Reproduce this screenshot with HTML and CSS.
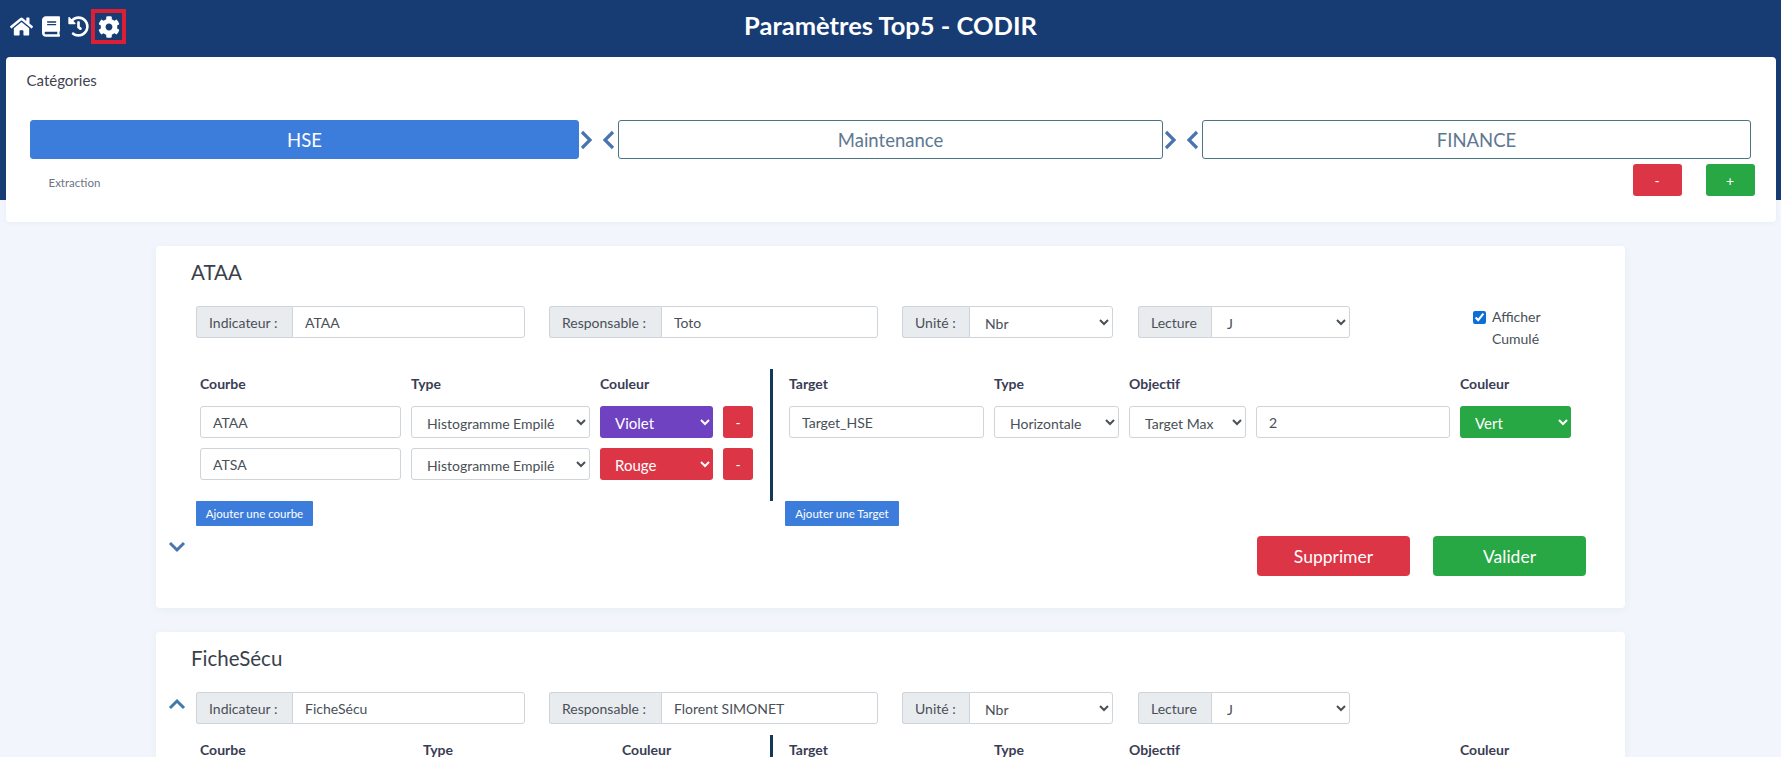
FILE: index.html
```html
<!DOCTYPE html>
<html lang="fr">
<head>
    <meta charset="UTF-8">
    <meta name="viewport" content="width=device-width, initial-scale=1.0">
    <title>Paramètres Top5 - CODIR</title>
    <link rel="stylesheet" href="styles.css">
</head>
<body>

    <header class="topbar">
        <nav class="topbar-icons">
            <a class="nav-icon nav-home"><svg viewBox="0 0 576 512"><path d="M280.37 148.26L96 300.11V464a16 16 0 0 0 16 16l112.06-.29a16 16 0 0 0 15.92-16V368a16 16 0 0 1 16-16h64a16 16 0 0 1 16 16v95.64a16 16 0 0 0 16 16.05L464 480a16 16 0 0 0 16-16V300L295.67 148.26a12.19 12.19 0 0 0-15.3 0zM571.6 251.47L488 182.56V44.05a12 12 0 0 0-12-12h-56a12 12 0 0 0-12 12v72.61L318.47 43a48 48 0 0 0-61 0L4.34 251.47a12 12 0 0 0-1.6 16.9l25.5 31A12 12 0 0 0 45.15 301l235.22-193.74a12.19 12.19 0 0 1 15.3 0L530.9 301a12 12 0 0 0 16.9-1.6l25.5-31a12 12 0 0 0-1.7-16.93z"/></svg></a>
            <a class="nav-icon nav-book"><svg viewBox="0 0 448 512"><path d="M448 360V24c0-13.3-10.7-24-24-24H96C43 0 0 43 0 96v320c0 53 43 96 96 96h328c13.3 0 24-10.7 24-24v-16c0-7.5-3.5-14.3-8.9-18.7-4.2-15.4-4.2-59.3 0-74.7 5.4-4.3 8.9-11.1 8.9-18.6zM128 134c0-3.3 2.7-6 6-6h212c3.3 0 6 2.7 6 6v20c0 3.3-2.7 6-6 6H134c-3.3 0-6-2.7-6-6v-20zm0 64c0-3.3 2.7-6 6-6h212c3.3 0 6 2.7 6 6v20c0 3.3-2.7 6-6 6H134c-3.3 0-6-2.7-6-6v-20zm253.4 250H96c-17.7 0-32-14.3-32-32 0-17.6 14.4-32 32-32h285.4c-1.9 17.1-1.9 46.9 0 64z"/></svg></a>
            <a class="nav-icon nav-history"><svg viewBox="0 0 512 512"><path d="M504 255.531c.253 136.64-111.18 248.372-247.82 248.468-59.015.042-113.223-20.53-155.822-54.911-11.077-8.94-11.905-25.541-1.839-35.607l11.267-11.267c8.609-8.609 22.353-9.551 31.891-1.984C173.062 425.135 212.781 440 256 440c101.705 0 184-82.311 184-184 0-101.705-82.311-184-184-184-48.814 0-93.149 18.969-126.068 49.932l50.754 50.754c10.08 10.08 2.941 27.314-11.313 27.314H24c-8.837 0-16-7.163-16-16V38.627c0-14.254 17.234-21.393 27.314-11.314l49.372 49.372C129.209 34.136 189.552 8 256 8c136.81 0 247.747 110.78 248 247.531zm-180.912 78.784l9.823-12.63c8.138-10.463 6.253-25.542-4.21-33.679L288 256.349V152c0-13.255-10.745-24-24-24h-16c-13.255 0-24 10.745-24 24v135.651l65.409 50.874c10.463 8.137 25.541 6.253 33.679-4.21z"/></svg></a>
            <a class="nav-icon nav-settings"><svg viewBox="0 0 512 512"><path d="M487.4 315.7l-42.6-24.6c4.3-23.2 4.3-47 0-70.2l42.6-24.6c4.9-2.8 7.1-8.6 5.5-14-11.1-35.6-30-67.8-54.7-94.6-3.8-4.1-10-5.1-14.8-2.3L380.8 110c-17.9-15.4-38.5-27.3-60.8-35.1V25.8c0-5.6-3.9-10.5-9.4-11.7-36.7-8.2-74.3-7.8-109.2 0-5.5 1.2-9.4 6.1-9.4 11.7V75c-22.2 7.9-42.8 19.8-60.8 35.1L88.7 85.5c-4.9-2.8-11-1.9-14.8 2.3-24.7 26.7-43.6 58.9-54.7 94.6-1.7 5.4.6 11.2 5.5 14L67.3 221c-4.3 23.2-4.3 47 0 70.2l-42.6 24.6c-4.9 2.8-7.1 8.6-5.5 14 11.1 35.6 30 67.8 54.7 94.6 3.8 4.1 10 5.1 14.8 2.3l42.6-24.6c17.9 15.4 38.5 27.3 60.8 35.1v49.2c0 5.6 3.9 10.5 9.4 11.7 36.7 8.2 74.3 7.8 109.2 0 5.5-1.2 9.4-6.1 9.4-11.7v-49.2c22.2-7.9 42.8-19.8 60.8-35.1l42.6 24.6c4.9 2.8 11 1.9 14.8-2.3 24.7-26.7 43.6-58.9 54.7-94.6 1.5-5.5-.7-11.3-5.6-14.1zM256 336c-44.1 0-80-35.9-80-80s35.9-80 80-80 80 35.9 80 80-35.9 80-80 80z"/></svg></a>
        </nav>
        <h1 class="page-title">Paramètres Top5 - CODIR</h1>
    </header>

    <section class="categories">
        <h2 class="categories-title">Catégories</h2>
        <div class="tabs">
            <button class="tab tab-active">HSE</button>
            <div class="tab-arrows">
                <svg class="chevron" viewBox="0 0 14 20"><path d="M3 2l8 8-8 8"/></svg>
                <svg class="chevron" viewBox="0 0 14 20"><path d="M11 2l-8 8 8 8"/></svg>
            </div>
            <button class="tab">Maintenance</button>
            <div class="tab-arrows">
                <svg class="chevron" viewBox="0 0 14 20"><path d="M3 2l8 8-8 8"/></svg>
                <svg class="chevron" viewBox="0 0 14 20"><path d="M11 2l-8 8 8 8"/></svg>
            </div>
            <button class="tab">FINANCE</button>
        </div>
        <div class="tabs-footer">
            <span class="extraction">Extraction</span>
            <button class="btn btn-red btn-tab">-</button>
            <button class="btn btn-green btn-tab">+</button>
        </div>
    </section>

    <!-- ATAA -->
    <section class="card">
        <h3 class="card-title">ATAA</h3>
        <div class="filters">
            <div class="toggle-slot"></div>
            <div class="group group-indic"><span class="group-label">Indicateur :</span><input value="ATAA"></div>
            <div class="group group-resp"><span class="group-label">Responsable :</span><input value="Toto"></div>
            <div class="group group-unit"><span class="group-label">Unité :</span><select><option>Nbr</option></select></div>
            <div class="group group-read"><span class="group-label">Lecture</span><select><option>J</option></select></div>
            <label class="cumul"><input type="checkbox" checked><span>Afficher<br>Cumulé</span></label>
        </div>
        <div class="panels">
            <div class="panel-left">
                <div class="curve-grid head-row">
                    <span>Courbe</span><span>Type</span><span>Couleur</span>
                </div>
                <div class="curve-grid data-row">
                    <input value="ATAA">
                    <select><option>Histogramme Empilé</option></select>
                    <select class="color-select color-violet"><option>Violet</option></select>
                    <button class="btn btn-red btn-remove">-</button>
                </div>
                <div class="curve-grid data-row">
                    <input value="ATSA">
                    <select><option>Histogramme Empilé</option></select>
                    <select class="color-select color-red"><option>Rouge</option></select>
                    <button class="btn btn-red btn-remove">-</button>
                </div>
            </div>
            <div class="panel-right">
                <div class="target-grid head-row">
                    <span>Target</span><span>Type</span><span class="span-two">Objectif</span><span>Couleur</span>
                </div>
                <div class="target-grid data-row">
                    <input value="Target_HSE">
                    <select><option>Horizontale</option></select>
                    <select><option>Target Max</option></select>
                    <input value="2">
                    <select class="color-select color-green"><option>Vert</option></select>
                </div>
            </div>
        </div>
        <div class="add-row">
            <button class="btn btn-blue btn-add">Ajouter une courbe</button>
            <button class="btn btn-blue btn-add btn-add-target">Ajouter une Target</button>
        </div>
        <div class="card-footer">
            <svg class="toggle" viewBox="0 0 18 13"><path d="M2 3l7 7 7-7"/></svg>
            <div class="actions">
                <button class="btn btn-red btn-action">Supprimer</button>
                <button class="btn btn-green btn-action">Valider</button>
            </div>
        </div>
    </section>

    <!-- FicheSécu -->
    <section class="card">
        <h3 class="card-title">FicheSécu</h3>
        <div class="filters">
            <div class="toggle-slot"><svg class="toggle toggle-up" viewBox="0 0 18 13"><path d="M2 10l7-7 7 7"/></svg></div>
            <div class="group group-indic"><span class="group-label">Indicateur :</span><input value="FicheSécu"></div>
            <div class="group group-resp"><span class="group-label">Responsable :</span><input value="Florent SIMONET"></div>
            <div class="group group-unit"><span class="group-label">Unité :</span><select><option>Nbr</option></select></div>
            <div class="group group-read"><span class="group-label">Lecture</span><select><option>J</option></select></div>
        </div>
        <div class="panels panels-close">
            <div class="panel-left">
                <div class="curve-grid curve-grid-wide head-row">
                    <span>Courbe</span><span>Type</span><span>Couleur</span>
                </div>
            </div>
            <div class="panel-right">
                <div class="target-grid head-row">
                    <span>Target</span><span>Type</span><span class="span-two">Objectif</span><span>Couleur</span>
                </div>
            </div>
        </div>
    </section>

</body>
</html>
```
FILE: styles.css
```css
html, body {
    height: 757px;
    overflow: hidden;
}

body {
    margin: 0;
    font-family: 'Lato', 'Open Sans', sans-serif;
    font-size: 14px;
    color: #495057;
    /* the navy band runs behind the top of the categories card */
    background: linear-gradient(#173c74 200px, #f2f6fc 200px);
}

/* Top bar */
.topbar {
    display: flex;
    align-items: center;
    height: 57px;
    padding-left: 10px;
}

.topbar-icons {
    display: flex;
    align-items: center;
    height: 35px;
    margin-top: -4px;
}

.nav-icon {
    display: flex;
    fill: #ffffff;
}

.nav-home svg { width: 23px; height: 21px; }
.nav-book { margin-left: 9px; }
.nav-book svg { width: 18px; height: 21px; }
.nav-history { margin-left: 8px; }
.nav-history svg { width: 21px; height: 21px; }

.nav-settings {
    margin-left: 2px;
    width: 35px;
    height: 35px;
    box-sizing: border-box;
    border: 4px solid #dc1f35;
    align-items: center;
    justify-content: center;
}

.nav-settings svg { width: 22px; height: 22px; }

.page-title {
    flex: 1;
    margin: -8px 0 0 -126px;
    text-align: center;
    color: #ffffff;
    font-size: 25.5px;
    font-weight: 700;
}

/* Categories */
.categories {
    margin: 0 5.5px;
    height: 165px;
    box-sizing: border-box;
    padding-top: 14px;
    background-color: #ffffff;
    border-radius: 4px;
    box-shadow: 0 1px 4px rgba(60, 80, 120, 0.06);
}

.categories-title {
    margin: 0 0 0 21px;
    font-size: 15px;
    line-height: 18px;
    font-weight: 400;
    color: #3f4350;
}

.tabs {
    display: grid;
    grid-template-columns: 549px 39px 545px 39px 549px;
    height: 39px;
    margin: 31px 0 0 24.5px;
}

.tab {
    font-family: inherit;
    font-size: 18.5px;
    color: #5d7890;
    background-color: #ffffff;
    border: 1px solid #4a7585;
    border-radius: 3px;
    padding: 0;
}

.tab-active {
    color: #ffffff;
    background-color: #3c7ddc;
    border-color: #3c7ddc;
}

.tab-arrows {
    display: flex;
    align-items: center;
    justify-content: space-between;
    padding-right: 2px;
}

.chevron {
    width: 14px;
    height: 20px;
    fill: none;
    stroke: #4a74b0;
    stroke-width: 3.2;
}

.tabs-footer {
    display: flex;
    align-items: center;
    margin: 5px 21px 0 43px;
}

.extraction {
    flex: 1;
    margin-top: 4px;
    font-size: 11.5px;
    color: #6c7486;
}

/* Buttons */
.btn {
    font-family: inherit;
    color: #ffffff;
    border: none;
    border-radius: 3px;
    padding: 0;
}

.btn-red { background-color: #dc3545; }
.btn-green { background-color: #28a745; }
.btn-blue { background-color: #3c7ddc; }

.btn-tab {
    width: 49px;
    height: 32px;
    font-size: 14px;
}

.btn-tab + .btn-tab {
    margin-left: 24px;
}

/* Indicator cards */
.card {
    margin: 24px 156px 24px 156px;
    padding-top: 14px;
    background-color: #ffffff;
    border-radius: 4px;
    box-shadow: 0 2px 8px rgba(60, 80, 120, 0.06);
}

.card-title {
    margin: 0 0 22px 35px;
    font-size: 20.5px;
    line-height: 24px;
    font-weight: 400;
    color: #3a3f4c;
}

.filters {
    display: flex;
    align-items: flex-start;
}

.toggle-slot {
    width: 40px;
    flex-shrink: 0;
    padding: 6px 0 0 12px;
    box-sizing: border-box;
}

.group {
    display: flex;
    height: 32px;
}

.group-indic { width: 329px; margin-right: 24px; }
.group-resp { width: 329px; margin-right: 24px; }
.group-unit { width: 211px; margin-right: 25px; }
.group-read { width: 212px; }

.group-label {
    display: flex;
    align-items: center;
    padding: 0 12px;
    color: #495057;
    background-color: #e9ecef;
    border: 1px solid #ced4da;
    border-right: none;
    border-radius: 3px 0 0 3px;
    white-space: nowrap;
}

.group-indic .group-label { width: 96px; box-sizing: border-box; }
.group-resp .group-label { width: 112px; box-sizing: border-box; }
.group-unit .group-label { width: 67px; box-sizing: border-box; }
.group-read .group-label { width: 73px; box-sizing: border-box; }

input, select {
    font-family: inherit;
    font-size: 14px;
    color: #495057;
    height: 32px;
    width: 100%;
    min-width: 0;
    box-sizing: border-box;
    background-color: #ffffff;
    border: 1px solid #ced4da;
    border-radius: 3px;
    padding: 0 12px;
}

select {
    padding: 2px 0 0 11px;
}

.group input, .group select {
    flex: 1;
    border-radius: 0 3px 3px 0;
}

.cumul {
    display: flex;
    margin-left: 123px;
    line-height: 22px;
}

.cumul input {
    width: 13px;
    height: 13px;
    margin: 5px 6px 0 0;
    accent-color: #0b6fd6;
    flex-shrink: 0;
}

/* Curves and targets */
.panels {
    display: flex;
    margin-top: 19px;
}

.panels-close {
    margin-top: 11px;
}

.panel-left {
    width: 570px;
    margin-left: 44px;
    height: 132px;
}

.panel-right {
    height: 132px;
    border-left: 3px solid #0f3a5c;
    padding-left: 16px;
}

.curve-grid {
    display: grid;
    grid-template-columns: 201px 179px 113px 30px;
    column-gap: 10px;
}

.curve-grid-wide {
    grid-template-columns: 213px 189px 113px 30px;
}

.target-grid {
    display: grid;
    grid-template-columns: 195px 125px 117px 194px 111px;
    column-gap: 10px;
}

.span-two {
    grid-column: span 2;
}

.head-row {
    height: 37px;
    align-items: start;
    line-height: 30px;
    font-weight: 700;
    color: #3a3d55;
}

.data-row {
    height: 32px;
    margin-bottom: 10px;
}

.color-select {
    color: #ffffff;
    font-size: 15px;
    padding-left: 11px;
    border: none;
}

.color-violet { background-color: #6f42c1; }
.color-red { background-color: #dc3545; }
.color-green { background-color: #28a745; }

.btn-remove {
    width: 30px;
    height: 32px;
    font-size: 14px;
}

.add-row {
    display: flex;
    padding-left: 40px;
}

.btn-add {
    width: 117px;
    height: 25px;
    font-size: 11.5px;
    border-radius: 1px;
}

.btn-add-target {
    width: 114px;
    margin-left: 472px;
}

.card-footer {
    display: flex;
    align-items: flex-start;
    padding: 10px 39px 32px 12px;
}

.toggle {
    display: block;
    width: 18px;
    height: 13px;
    fill: none;
    stroke: #4a74b0;
    stroke-width: 3;
    margin-top: 4px;
}

.toggle-up {
    stroke: #3f7aa8;
    margin-top: 0;
}

.actions {
    display: flex;
    gap: 23px;
    margin-left: auto;
}

.btn-action {
    width: 153px;
    height: 40px;
    font-size: 17.5px;
    border-radius: 4px;
}
```
